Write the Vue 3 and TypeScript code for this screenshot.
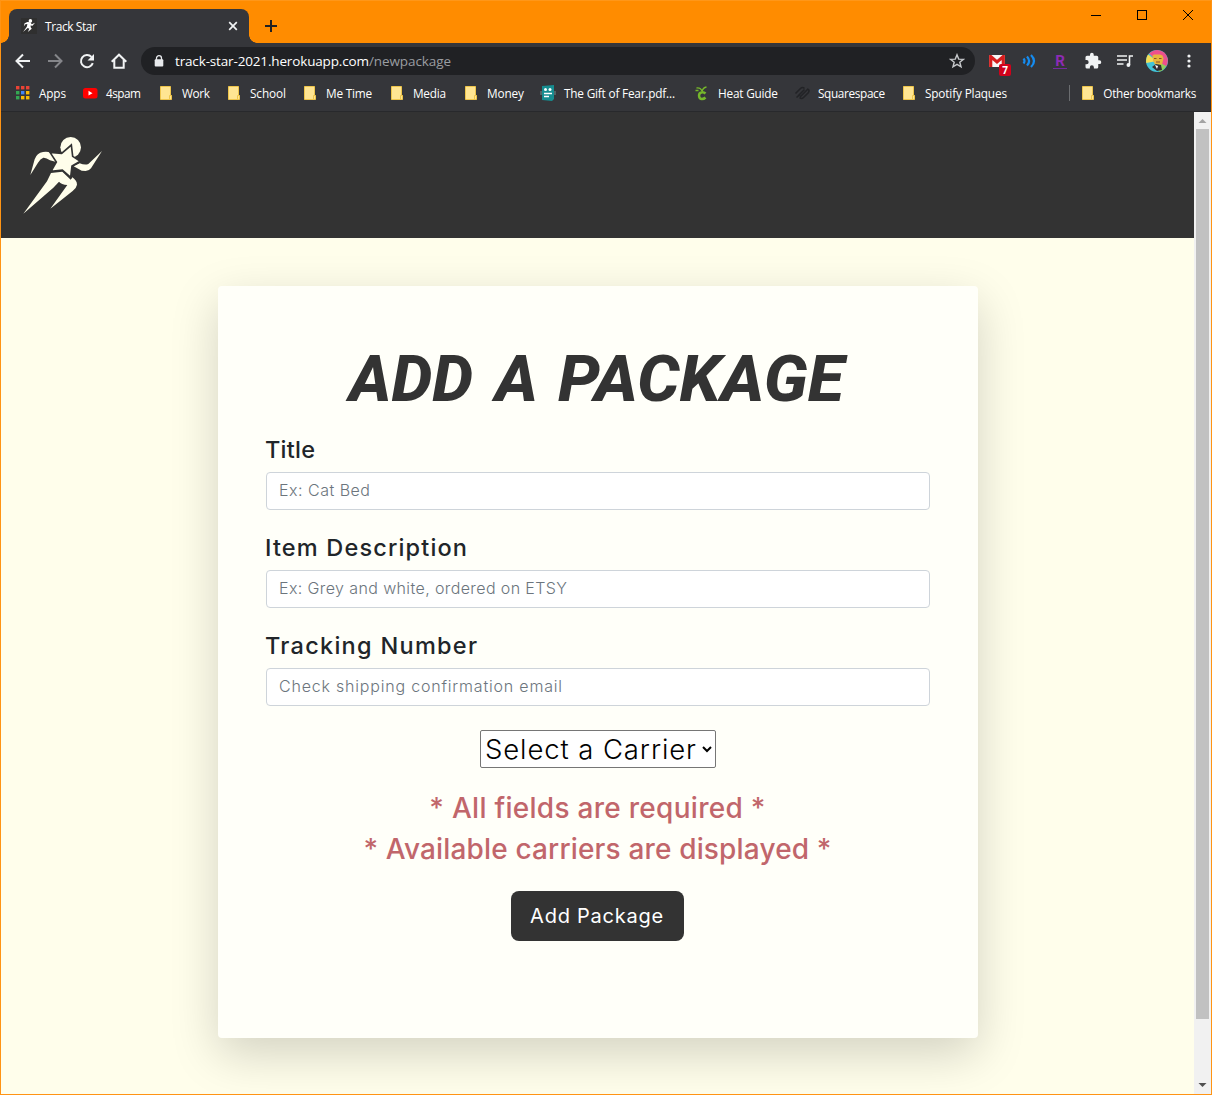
<script setup lang="ts">
import { ref } from 'vue'
import type { Directive } from 'vue'

interface Bookmark {
  label: string
  icon: string
  cell: number
  text: number
}

interface Field {
  label: string
  labelWidth: number
  hint: string
  hintWidth: number
}

const bookmarks: Bookmark[] = [
  { label: 'Apps', icon: 'apps', cell: 67, text: 27 },
  { label: '4spam', icon: 'youtube', cell: 76, text: 35 },
  { label: 'Work', icon: 'folder', cell: 68, text: 28 },
  { label: 'School', icon: 'folder', cell: 76, text: 36 },
  { label: 'Me Time', icon: 'folder', cell: 87, text: 46 },
  { label: 'Media', icon: 'folder', cell: 74, text: 33 },
  { label: 'Money', icon: 'folder', cell: 77, text: 37 },
  { label: 'The Gift of Fear.pdf...', icon: 'pdf', cell: 154, text: 111 },
  { label: 'Heat Guide', icon: 'heat', cell: 100, text: 60 },
  { label: 'Squarespace', icon: 'square', cell: 107, text: 67 },
  { label: 'Spotify Plaques', icon: 'folder', cell: 110, text: 82 },
]

const appColors = ['#ea4335', '#ea4335', '#ea4335', '#34a853', '#4285f4', '#fbbc05', '#34a853', '#fbbc05', '#fbbc05']

const fields: Field[] = [
  { label: 'Title', labelWidth: 50, hint: 'Ex: Cat Bed', hintWidth: 91 },
  { label: 'Item Description', labelWidth: 202, hint: 'Ex: Grey and white, ordered on ETSY', hintWidth: 288 },
  { label: 'Tracking Number', labelWidth: 212, hint: 'Check shipping confirmation email', hintWidth: 283 },
]

const values = ref<string[]>(['', '', ''])
const carrier = ref('')

// Tracks the letters of an element so that its text takes the given width.
const vFit: Directive<HTMLElement, number> = {
  mounted(el, { value }) {
    const style = getComputedStyle(el)
    const ctx = document.createElement('canvas').getContext('2d')
    if (!ctx) return
    const text = el instanceof HTMLInputElement
      ? el.placeholder
      : el instanceof HTMLSelectElement
        ? el.options[0].text
        : (el.textContent ?? '').trim()
    ctx.font = `${style.fontStyle} ${style.fontWeight} ${style.fontSize} ${style.fontFamily}`
    const spacing = (value - ctx.measureText(text).width) / (text.length - 1)
    el.style.letterSpacing = `${spacing.toFixed(3)}px`
  },
}
</script>

<template>
  <div class="window">
    <div class="titlebar">
      <div class="tab">
        <svg class="favicon" viewBox="0 0 16 16" width="16" height="16">
          <rect width="16" height="16" fill="#2f2f2f" />
          <circle cx="9.400" cy="2.900" r="1.800" fill="#fff" />
          <path d="M6.500 4l3 .3 1.200 2 3.300-1.600-2.500 3-2-.2.300 2 1 1.200-4 3.300 1.500-3.300-1.600-.7-4.700 4 3.800-5.200.600-2.800-2 .3-1.600 2.200.8-3.200z" fill="#fff" />
        </svg>
        <span v-fit="52" class="tab-title">Track Star</span>
        <svg class="tab-close" viewBox="0 0 10 10" width="10" height="10"><path d="M1.200 1.200l7.600 7.600M8.800 1.200l-7.600 7.600" stroke="#f1f3f4" stroke-width="1.700" /></svg>
      </div>
      <svg class="new-tab" viewBox="0 0 14 14" width="14" height="14"><path d="M7 1v12M1 7h12" stroke="#202124" stroke-width="2" /></svg>
      <div class="controls">
        <svg viewBox="0 0 12 12" width="12" height="12"><path d="M1 6.500h10" stroke="#000" /></svg>
        <svg viewBox="0 0 12 12" width="12" height="12"><rect x="1.500" y="1.500" width="9" height="9" fill="none" stroke="#000" /></svg>
        <svg viewBox="0 0 12 12" width="12" height="12"><path d="M1 1l10 10M11 1L1 11" stroke="#000" /></svg>
      </div>
    </div>

    <div class="toolbar">
      <div class="nav">
        <svg viewBox="0 0 16 16" width="16" height="16"><path d="M15 8H2M8 1.500L1.500 8 8 14.500" fill="none" stroke="#f1f3f4" stroke-width="2" /></svg>
        <svg viewBox="0 0 16 16" width="16" height="16"><path d="M1 8h13M8 1.500L14.500 8 8 14.500" fill="none" stroke="#85868a" stroke-width="2" /></svg>
        <svg viewBox="0 0 16 16" width="16" height="16"><path d="M13.800 10.200A6.100 6.100 0 1 1 12.500 3.900" fill="none" stroke="#f1f3f4" stroke-width="2" /><path d="M15 1v6.500H8.500z" fill="#f1f3f4" /></svg>
        <svg viewBox="0 0 16 16" width="16" height="16"><path d="M.7 8.700L8 1.700l7.300 7M3.300 7v7.800h9.400V7" fill="none" stroke="#f1f3f4" stroke-width="2" /></svg>
      </div>
      <div class="omnibox">
        <svg class="lock" viewBox="0 0 10 12" width="10" height="12"><path d="M2.500 5V3.200a2.500 2.500 0 0 1 5 0V5" fill="none" stroke="#e8eaed" stroke-width="1.300" /><rect x=".7" y="4.300" width="8.600" height="7.300" rx="1" fill="#e8eaed" /></svg>
        <span class="host"><span v-fit="194">track-star-2021.herokuapp.com</span></span>
        <span v-fit="82" class="path">/newpackage</span>
        <svg class="star" viewBox="0 0 16 16" width="16" height="16"><path d="M8 1.800l1.700 4.300 4.700.3-3.600 2.900 1.200 4.500L8 11.300l-4 2.500 1.200-4.500-3.600-2.900 4.700-.3z" fill="none" stroke="#c6c8cb" stroke-width="1.400" /></svg>
      </div>
      <div class="extensions">
        <div class="ext mail">
          <svg viewBox="0 0 16 12" width="16" height="12"><rect width="16" height="12" fill="#f7f7f7" /><path d="M1.700 12V1.500L8 7l6.300-5.500V12" fill="none" stroke="#d71e1e" stroke-width="3.200" /></svg>
          <span class="badge">7</span>
        </div>
        <svg viewBox="0 0 16 16" width="16" height="16"><path d="M2.500 5.500q2 2.500 0 5M6 3.500q4.200 4.500 0 9M10 2q6 6 0 12" fill="none" stroke="#158cf0" stroke-width="2.200" /></svg>
        <span class="rakuten">R</span>
        <svg viewBox="0 0 24 24" width="18" height="18"><path d="M20.500 11H19V7a2 2 0 0 0-2-2h-4V3.500a2.500 2.500 0 0 0-5 0V5H4a2 2 0 0 0-2 2v3.800h1.500a2.700 2.700 0 0 1 0 5.400H2V20a2 2 0 0 0 2 2h3.800v-1.500a2.700 2.700 0 0 1 5.400 0V22H17a2 2 0 0 0 2-2v-4h1.500a2.500 2.500 0 0 0 0-5z" fill="#f1f3f4" /></svg>
        <svg viewBox="0 0 16 14" width="16" height="14"><path d="M0 2h10M0 6h10M0 10h6.500M12.500 11V2H16" fill="none" stroke="#f1f3f4" stroke-width="1.600" /><circle cx="11.400" cy="11" r="1.900" fill="#f1f3f4" /></svg>
        <svg viewBox="0 0 22 22" width="22" height="22">
          <circle cx="11" cy="11" r="11" fill="#42c4d8" />
          <path d="M11 11L3 3.500A11 11 0 0 1 21 6.500z" fill="#ee508d" />
          <path d="M11 11L2 4.600A11 11 0 0 0 .3 13z" fill="#f4de55" />
          <path d="M11 11l10-4.500a11 11 0 0 1-1 10z" fill="#ee508d" />
          <path d="M11 11l9 5a11 11 0 0 1-7 5.800z" fill="#91ce59" />
          <path d="M6.500 5.500l1.500-1h6l2.500 1 1 3-1.500 6h-7l-2-4z" fill="#e8b63c" />
          <path d="M8 8.500h2.500M13 8.500h2.500M10 12h4" stroke="#8c5129" />
          <path d="M6 17l4-3 5 1 1 5-5 1z" fill="#343033" />
          <path d="M9 15l3 1-1 3z" fill="#fff" />
        </svg>
        <svg class="dots" viewBox="0 0 4 16" width="4" height="16"><circle cx="2" cy="3" r="1.600" fill="#f1f3f4" /><circle cx="2" cy="8" r="1.600" fill="#f1f3f4" /><circle cx="2" cy="13" r="1.600" fill="#f1f3f4" /></svg>
      </div>
    </div>

    <div class="bookmarks">
      <div v-for="b in bookmarks" :key="b.label" class="bookmark" :style="{ width: b.cell + 'px' }">
        <svg v-if="b.icon === 'apps'" viewBox="0 0 16 16" width="16" height="16">
          <rect v-for="(c, i) in appColors" :key="i" :x="1 + (i % 3) * 5" :y="1 + Math.floor(i / 3) * 5" width="3.400" height="3.400" :fill="c" />
        </svg>
        <svg v-else-if="b.icon === 'youtube'" viewBox="0 0 16 16" width="16" height="16"><rect x="1" y="3" width="14.500" height="10.500" rx="2.500" fill="#f00" /><path d="M6.500 5.800l4 2.400-4 2.400z" fill="#fff" /></svg>
        <svg v-else-if="b.icon === 'folder'" viewBox="0 0 16 16" width="16" height="16"><path d="M2.500 1.500h10v9h1v4h-11z" fill="#ffe592" stroke="#eec54b" /><path d="M11.500 14v-3.500h2" fill="none" stroke="#eec54b" /></svg>
        <svg v-else-if="b.icon === 'pdf'" viewBox="0 0 16 16" width="16" height="16"><path d="M0 6h16v4H0z" fill="#526264" /><path d="M2 1l12-1v14l-2 2-10-1z" fill="#168d90" /><circle cx="5.500" cy="4.500" r="1.500" fill="#fff" /><circle cx="10" cy="4.500" r="1.500" fill="#fff" /><path d="M4 8.500h8M4 11.500h5" stroke="#fff" stroke-width="1.300" /></svg>
        <svg v-else-if="b.icon === 'heat'" viewBox="0 0 16 16" width="16" height="16"><path d="M11.500 8.500Q10 7 8 7.200C3.800 7.500 4.300 14.300 8 14q2 0 3.500-1.500" fill="none" stroke="#75b72b" stroke-width="2.500" /><path d="M8 6.500Q7 2.500 2.500 3M8 6.500q1-4 4.500-4.500M1.500 5.500h3" fill="none" stroke="#75b72b" stroke-width="1.300" /></svg>
        <svg v-else viewBox="0 0 16 16" width="16" height="16"><path d="M1.500 8.500l5-5q2-2 4 0M4 11l6.500-6.500M5.500 12.500q2 2 4 0l5-5q1.500-3-1.500-3.500M6 9.500l-3.500 3M13.500 4.500L6 12" fill="none" stroke="#222326" stroke-width="1.600" /></svg>
        <span v-fit="b.text">{{ b.label }}</span>
      </div>
      <div class="bookmark other">
        <svg viewBox="0 0 16 16" width="16" height="16"><path d="M2.500 1.500h10v9h1v4h-11z" fill="#ffe592" stroke="#eec54b" /><path d="M11.500 14v-3.500h2" fill="none" stroke="#eec54b" /></svg>
        <span v-fit="93">Other bookmarks</span>
      </div>
    </div>

    <div class="viewport">
      <div class="page">
        <header class="site-header">
          <svg class="logo" viewBox="0 0 330 300" width="110" height="100" fill="#fffeeb">
            <circle cx="182" cy="67" r="31" />
            <path d="M61 150L74 103Q81 83 99 81Q113 79 121 83L139 111L120 106Q108 97 100 98Q91 101 84 113Z" />
            <path d="M191 124L209 115Q225 121 235 117L276 78L243 130Q237 138 227 138L215 137Z" />
            <path d="M123 144L157 140L182 164L187 157Q201 167 201 179Q199 190 188 198L121 251L151 209L172 180Q154 179 147 170L130 188L40 266L111 169Z" />
            <path d="M184 60L188 94L211 109L186 123L182 157L157 135L123 139L139 111L120 82L155 85Z" stroke="#333" stroke-width="5" />
          </svg>
        </header>
        <main class="content">
          <section class="card">
            <h1 class="heading">
              <svg viewBox="0 0 520 78" width="520" height="78">
                <text x="11" y="63" textLength="124" lengthAdjust="spacingAndGlyphs">ADD</text>
                <text x="157" y="63" textLength="43" lengthAdjust="spacingAndGlyphs">A</text>
                <text x="220" y="63" textLength="286" lengthAdjust="spacingAndGlyphs">PACKAGE</text>
              </svg>
            </h1>
            <form @submit.prevent>
              <div v-for="(f, i) in fields" :key="f.label" class="field">
                <label :for="'field-' + i"><span v-fit="f.labelWidth">{{ f.label }}</span></label>
                <input :id="'field-' + i" v-model="values[i]" v-fit="f.hintWidth" type="text" :placeholder="f.hint">
              </div>
              <div class="centered">
                <select v-model="carrier" v-fit="211" class="carrier">
                  <option value="">Select a Carrier</option>
                </select>
              </div>
              <div class="notes">
                <p><span v-fit="336">* All fields are required *</span></p>
                <p><span v-fit="468">* Available carriers are displayed *</span></p>
              </div>
              <div class="centered">
                <button class="submit" type="submit"><span v-fit="133">Add Package</span></button>
              </div>
            </form>
          </section>
        </main>
      </div>
      <div class="scrollbar">
        <svg viewBox="0 0 17 17" width="17" height="17"><path d="M4.500 11L8.500 7l4 4z" fill="#a3a3a3" /></svg>
        <div class="thumb"></div>
        <svg viewBox="0 0 17 17" width="17" height="17"><path d="M4.500 6L8.500 10l4-4z" fill="#505050" /></svg>
      </div>
    </div>
  </div>
</template>

<style>
body { margin: 0; overflow: hidden; }
</style>

<style scoped>
* { box-sizing: border-box; }
svg { display: block; flex: none; }
span { white-space: nowrap; }
.window {
  width: 1212px; height: 1095px; overflow: hidden;
  display: flex; flex-direction: column;
  border: 1px solid #ff9414; border-top: 0;
  background: #35363a;
  font-family: "Open Sans", "Noto Sans", sans-serif;
}
.titlebar {
  height: 43px; flex: none; display: flex; align-items: flex-start;
  background: #ff8c00; border-top: 1px solid #ff9719; padding-left: 8px;
}
.tab {
  position: relative; width: 240px; height: 34px; margin-top: 8px;
  display: flex; align-items: center; padding: 0 11px 0 12px;
  background: #35363a; border-radius: 8px 8px 0 0;
  color: #fff; font-size: 12px;
}
.tab::before, .tab::after {
  content: ""; position: absolute; bottom: 0; width: 8px; height: 8px;
}
.tab::before { left: -8px; background: radial-gradient(circle at 0 0, transparent 7.5px, #35363a 8px); }
.tab::after { right: -8px; background: radial-gradient(circle at 100% 0, transparent 7.5px, #35363a 8px); }
.tab-title { margin-left: 8px; }
.tab-close { margin-left: auto; }
.new-tab { margin: 18px 0 0 15px; }
.controls { margin: 8px 17px 0 auto; display: flex; gap: 34px; }
.toolbar { height: 36px; flex: none; display: flex; align-items: center; }
.nav { display: flex; gap: 16px; margin-left: 14px; }
.omnibox {
  width: 834px; height: 28px; margin-left: 14px; padding: 0 10px 0 13px;
  display: flex; align-items: center;
  border-radius: 14px; background: #202124; color: #fff; font-size: 13.5px;
}
.host { width: 194px; margin-left: 11px; }
.path { color: #9a9da1; }
.star { margin-left: auto; }
.extensions { display: flex; align-items: center; margin-left: 14px; }
.extensions > :nth-child(2) { margin-left: 16px; }
.extensions > :nth-child(3) { margin-left: 16px; }
.extensions > :nth-child(4) { margin-left: 15px; }
.extensions > :nth-child(5) { margin-left: 15px; }
.extensions > :nth-child(6) { margin-left: 13px; }
.extensions > :nth-child(7) { margin-left: 19px; }
.mail { position: relative; width: 16px; height: 12px; }
.badge {
  position: absolute; left: 10px; top: 9px; width: 12px; height: 12px;
  border-radius: 2px; background: #d0021b; color: #fff;
  font: bold 10px/12px "Open Sans", sans-serif; text-align: center;
}
.rakuten {
  width: 14px; height: 15px; margin-right: 2px; color: #8d2bb5; text-align: center;
  font: bold 15px/14px "Roboto", sans-serif; border-bottom: 1px solid #7529a0;
}
.bookmarks {
  height: 33px; flex: none; display: flex; align-items: center;
  padding: 0 15px 5px 14px; border-bottom: 1px solid #28292c;
  color: #fff; font-size: 11.8px; line-height: 16px;
}
.bookmark { display: flex; align-items: center; gap: 8px; flex: none; height: 16px; }
.other { margin-left: auto; padding-left: 10px; gap: 7px; border-left: 1px solid #6b6d70; }
.viewport { flex: 1; min-height: 0; display: flex; }
.page { flex: 1; overflow: hidden; background: #fffeeb; font-family: "Inter", sans-serif; }
.site-header { height: 126px; background: #333; padding: 13px 0 0 9px; }
.content { display: flex; justify-content: center; padding-top: 48px; margin-left: 1px; }
.card {
  width: 760px; height: 752px; padding: 52px 48px 0; border-radius: 4px;
  background: #fffff9; box-shadow: 0 16px 48px rgba(0, 0, 0, .175);
}
.heading { margin: 0 0 0 72px; height: 98px; }
.heading text {
  fill: #333; font: italic 800 65px "Roboto", sans-serif;
}
form { display: block; }
.field { height: 74px; margin-bottom: 24px; }
label {
  display: block; height: 36px; margin-left: -1px;
  font-size: 23.5px; font-weight: 500; line-height: 28px; color: #212529;
}
input {
  display: block; width: 664px; height: 38px; padding: 5px 12px 7px;
  border: 1px solid #ced4da; border-radius: 4px; background: #fff;
  font: 300 16px/24px "Inter", sans-serif; color: #212529; outline: 0;
}
input::placeholder { color: #6c757d; opacity: 1; }
.centered { display: flex; justify-content: center; }
.carrier {
  width: 236px; height: 38px; padding: 0; border: 1px solid #767676; border-radius: 2px;
  background: #fff; color: #000; font: 300 27.5px "Inter", sans-serif;
}
.notes { margin-top: 20px; margin-left: -1px; color: #c1666b; font-size: 28px; font-weight: 500; text-align: center; }
.notes p { margin: 0; height: 41px; line-height: 41px; }
.submit {
  width: 173px; height: 50px; margin: 21px 2px 0 0; padding: 0; border: 0; border-radius: 8px;
  background: #333; color: #fff; font: 400 20px "Inter", sans-serif;
}
.scrollbar { width: 17px; flex: none; display: flex; flex-direction: column; background: #f1f1f1; }
.thumb { width: 13px; height: 890px; margin: 0 auto; background: #c1c1c1; }
.scrollbar svg:last-child { margin-top: auto; }
</style>
